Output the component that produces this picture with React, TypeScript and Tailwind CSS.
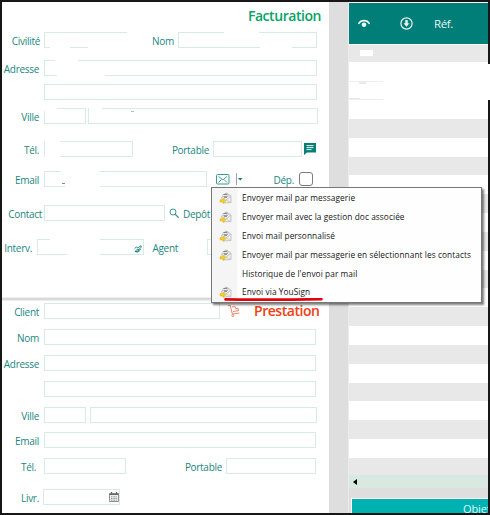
import type { ReactNode } from "react";

function Row({ className, children }: { className: string; children: ReactNode }) {
  return <div className={`flex shrink-0 items-center ${className}`}>{children}</div>;
}

function Label({ className = "w-[37px]", children }: { className?: string; children: ReactNode }) {
  return (
    <span className={`flex shrink-0 justify-end whitespace-nowrap pt-[2px] text-[10px] font-medium leading-4 tracking-[-0.3px] text-[#1a8780] ${className}`}>
      {children}
    </span>
  );
}

function Field({ className, children }: { className: string; children?: ReactNode }) {
  return (
    <div className={`flex h-4 shrink-0 items-center justify-end border border-[#d9ebe5] bg-white ${className}`}>
      {children}
    </div>
  );
}

function MailItemIcon() {
  return (
    <svg width="13" height="12" viewBox="0 0 13 12">
      <path d="M2.5 5 7 .8 12 4v6.5l-8 .5z" fill="#ededea" stroke="#b3b3b1" strokeWidth=".7" />
      <path d="M4 2.5 8.5 2l2 3-3 2.5L3.8 6z" fill="#fff" stroke="#aaa" strokeWidth=".4" />
      <path d="M4.5 2.6 8.500 2.200M4.500 4.400l4.500-.2M5 5.700l3-.1" stroke="#555" strokeWidth=".7" />
      <path d="m7 8 4.800-3.600M7 8l4.500 2.400" stroke="#bbb" strokeWidth=".6" />
      <path d="M1 7.700h3.300V6.200L7 8.800l-2.700 2.600V10H1z" fill="#f8cf1c" stroke="#e0b01a" strokeWidth=".5" />
    </svg>
  );
}

const menu = [
  { text: "Envoyer mail par messagerie", icon: true },
  { text: "Envoyer mail avec la gestion doc associée", icon: true },
  { text: "Envoi mail personnalisé", icon: true },
  { text: "Envoyer mail par messagerie en sélectionnant les contacts", icon: true },
  { text: "Historique de l'envoi par mail", icon: false },
  { text: "Envoi via YouSign", icon: true },
];

function ContextMenu() {
  return (
    <div className="absolute left-[211px] top-[187px] h-[116px] w-[271px] border border-[#777] bg-[#fefefe] shadow-[2px_2px_2px_rgba(0,0,0,0.5)]">
      <div className="flex h-full flex-col bg-[linear-gradient(90deg,#f5f5f5_25px,#fefefe_26px)] pt-[1px]">
        {menu.map((m) => (
          <div key={m.text} className="flex h-[18.8px] shrink-0 items-center">
            <span className="flex w-[30px] shrink-0 pl-[7px]">{m.icon && <MailItemIcon />}</span>
            <span className="whitespace-nowrap text-[8.3px] font-medium leading-3 tracking-[0.07px] text-[#161616]">{m.text}</span>
          </div>
        ))}
      </div>
      <svg className="absolute left-[12px] top-[109px]" width="100" height="5" viewBox="0 0 100 5">
        <path d="M1.500 2.400C30 3 65 2.500 97.500 2.200" stroke="#e1050b" strokeWidth="2.600" strokeLinecap="round" fill="none" />
      </svg>
    </div>
  );
}

function Billing() {
  return (
    <section className="flex h-[295px] shrink-0 flex-col">
      <h2 className="mt-[4px] flex h-[20px] justify-end pr-[8px] text-[14px] font-semibold leading-5 tracking-[-0.45px] text-[#06a366]">Facturation</h2>
      <Row className="mt-[6px] h-4">
        <Label className="w-[38px]">Civilité</Label>
        <Field className="ml-1 w-[96px]" />
        <Label className="ml-[3px] w-[31px]">Nom</Label>
        <Field className="ml-1 w-[139px]" />
      </Row>
      <Row className="mt-[12px] h-4">
        <Label>Adresse</Label>
        <Field className="ml-[5px] w-[273px]" />
      </Row>
      <Row className="mt-[8px] h-4">
        <Field className="ml-[42px] w-[273px]" />
      </Row>
      <Row className="mt-[8px] h-4">
        <Label>Ville</Label>
        <Field className="ml-[5px] w-[42px]" />
        <Field className="ml-[2px] w-[230px]" />
      </Row>
      <Row className="mt-[17px] h-4">
        <Label>Tél.</Label>
        <Field className="ml-[5px] w-[89px]" />
        <Label className="w-[76px]">Portable</Label>
        <Field className="ml-1 w-[89px]" />
        <svg className="ml-[2px]" width="12" height="12" viewBox="0 0 12 12">
          <path d="M0 0h12v9.500H3L0 12z" fill="#087e77" />
          <path d="M2.500 2.600h7M2.500 4.600h7M2.500 6.600h5" stroke="#fff" strokeWidth=".9" />
        </svg>
      </Row>
      <Row className="mt-[14px] h-4">
        <Label>Email</Label>
        <Field className="ml-[5px] w-[163px]" />
        <svg className="ml-[9px]" width="14" height="11" viewBox="0 0 14 11" fill="none" stroke="#3a9a94">
          <rect x=".5" y=".5" width="12.500" height="9.500" rx="1" />
          <path d="m2.500 2.500 4.300 3.300L11 2.500M2.500 8.500l3-3M11 8.500l-3-3" />
        </svg>
        <svg className="ml-[6px]" width="7" height="12" viewBox="0 0 7 12">
          <path d="M.5 0v12" stroke="#888" strokeWidth=".8" />
          <path d="M2 5h4.500L4.250 7.500z" fill="#087e77" />
        </svg>
        <Label className="w-[51px]">Dép.</Label>
        <div className="ml-[5px] size-[14px] rounded-[3px] border border-[#7c7c7c] bg-white" />
      </Row>
      <Row className="mt-[18px] h-4">
        <Label className="w-[40px]">Contact</Label>
        <Field className="ml-[2px] w-[121px]" />
        <svg className="ml-[4px]" width="11" height="11" viewBox="0 0 11 11" fill="none" stroke="#3a9690">
          <circle cx="4" cy="4" r="3" />
          <path d="m6.200 6.200 3.500 3.500" strokeWidth="1.300" />
        </svg>
        <Label className="w-[30px]">Depôt</Label>
      </Row>
      <Row className="mt-[18px] h-4">
        <Label className="w-[30px]">Interv.</Label>
        <Field className="ml-[5px] w-[107px] pr-[1px]">
          <svg className="mt-1" width="8" height="8" viewBox="0 0 8 8" fill="none" stroke="#087e77" strokeWidth=".9">
            <path d="M.6 3.600 2.300 2l1.500.8L6.900.8 7.300 2 5 4.500 2.800 4.800 1 6.500h2l3.800-2.300M2.600 7.400 5.600 6" />
          </svg>
        </Field>
        <Label className="w-[34px]">Agent</Label>
        <Field className="ml-[29px] w-[40px]" />
      </Row>
    </section>
  );
}

function Service() {
  return (
    <section className="flex flex-col">
      <Row className="mt-[2px] h-4">
        <Label>Client</Label>
        <Field className="ml-[5px] w-[176px]" />
        <svg className="ml-[8px]" width="13" height="12" viewBox="0 0 13 12" fill="none" stroke="#ef7657" strokeWidth=".9">
          <path d="M0 .6h2.300l2 8.400 7-1M5 6.500l5.500-.8-.5-2.500-2.300.4L7 1.500l-3 .6" />
          <circle cx="4.800" cy="10.500" r="1" />
        </svg>
        <h2 className="ml-[13px] whitespace-nowrap text-[14px] font-semibold leading-4 tracking-[-0.45px] text-[#f04012]">Prestation</h2>
      </Row>
      <Row className="mt-[10px] h-4">
        <Label>Nom</Label>
        <Field className="ml-[5px] w-[272px]" />
      </Row>
      <Row className="mt-[10px] h-4">
        <Label>Adresse</Label>
        <Field className="ml-[5px] w-[272px]" />
      </Row>
      <Row className="mt-[10px] h-4">
        <Field className="ml-[42px] w-[272px]" />
      </Row>
      <Row className="mt-[10px] h-4">
        <Label>Ville</Label>
        <Field className="ml-[5px] w-[42px]" />
        <Field className="ml-[4px] w-[227px]" />
      </Row>
      <Row className="mt-[9px] h-4">
        <Label>Email</Label>
        <Field className="ml-[5px] w-[272px]" />
      </Row>
      <Row className="mt-[10px] h-4">
        <Label className="w-[34px]">Tél.</Label>
        <Field className="ml-[8px] w-[82px]" />
        <Label className="w-[96px]">Portable</Label>
        <Field className="ml-1 w-[90px]" />
      </Row>
      <Row className="mt-[15px] h-4">
        <Label>Livr.</Label>
        <Field className="ml-[4px] w-[77px]">
          <svg width="10" height="10" viewBox="0 0 10 10">
            <path d="M.5 1.500h9v8h-9z" fill="#eee" stroke="#777" strokeWidth=".8" />
            <path d="M.5 2.300h9M2.500 0v2M7.500 0v2" stroke="#666" strokeWidth="1.300" />
            <path d="M2 4.800h6M2 6.500h6M2 8.200h6" stroke="#888" strokeWidth=".9" strokeDasharray="1 .6" />
          </svg>
        </Field>
      </Row>
    </section>
  );
}

function Table() {
  return (
    <section className="flex w-[139px] shrink-0 flex-col">
      <header className="mt-[1px] flex h-[41px] shrink-0 items-center bg-[#007e77] text-[#e9f6f4]">
        <svg className="ml-[9px]" width="12" height="10" viewBox="0 0 12 10" fill="none" stroke="currentColor">
          <path d="M.5 5C2.500.4 9.500.4 11.500 5" strokeWidth="1.700" />
          <circle cx="6" cy="5.800" r="2.300" fill="currentColor" stroke="none" />
        </svg>
        <svg className="ml-[30px]" width="13" height="13" viewBox="0 0 13 13" fill="none" stroke="currentColor">
          <circle cx="6.500" cy="6.500" r="5.600" strokeWidth="1.200" />
          <path d="M5.300 3h2.400v3.200h1.700L6.500 9.700 3.600 6.200h1.700z" fill="currentColor" stroke="none" />
        </svg>
        <span className="ml-[21px] text-[11.5px] tracking-[-0.4px]">Réf.</span>
      </header>
      <div className="h-[18px] shrink-0 border-t border-white bg-[#e8e8e8] pl-[11px] pt-[5px]">
        <div className="h-[6px] w-[13px] bg-white" />
      </div>
      <div className="h-[57px] shrink-0 bg-white pt-[19px]">
        <div className="h-px w-[34px] bg-[#eee]" />
        <div className="ml-[10px] h-[2px] w-[7px] bg-[#eaeaea]" />
        <div className="mt-[14px] h-[2px] w-[11px] bg-[#e6e6e6]" />
        <div className="-mt-px h-px w-[34px] bg-[#eee]" />
      </div>
      <div className="h-[356px] shrink-0 bg-[repeating-linear-gradient(180deg,#e8e8e8_0px,#e8e8e8_18.800px,#ffffff_18.800px,#ffffff_37.670px)]" />
      <div className="flex h-[13px] shrink-0 items-center bg-[#d9e8e1] pl-[4px]">
        <div className="border-y-[3px] border-r-[4px] border-y-transparent border-r-black" />
      </div>
      <div className="h-[10px] shrink-0 bg-[#dedede]" />
      <div className="flex h-[15px] shrink-0 bg-[#dedede] pl-[2px]">
        <footer className="flex-1 overflow-hidden border-l border-t border-white bg-[#00b1b2] pl-[111px] pt-[2px] text-[11px] leading-4 tracking-[-0.1px] text-[#def8f6]">
          Objet
        </footer>
      </div>
    </section>
  );
}

export default function App() {
  return (
    <div className="relative h-[515px] w-[490px] overflow-hidden bg-[#171717] pl-[2px] pt-[2px] font-['Open_Sans','Noto_Sans',sans-serif]">
      <div className="flex h-[511px] w-[486px] overflow-hidden bg-white">
        <div className="flex w-[327px] shrink-0 flex-col bg-white">
          <Billing />
          <div className="h-[4px] shrink-0 border-y border-[#eee] bg-[#d9d9d9]" />
          <Service />
        </div>
        <div className="w-[20px] shrink-0 border-r border-[#ececec] bg-[#dedede]" />
        <Table />
      </div>
      {/* Masked personal data */}
      <div className="absolute left-[127px] top-[31px] h-[20px] w-[14px] bg-white" />
      <div className="absolute left-[50px] top-[40px] h-[10px] w-[20px] bg-white" />
      <div className="absolute left-[88px] top-[40px] h-[10px] w-[50px] bg-white" />
      <div className="absolute left-[224px] top-[31px] h-[5px] w-[35px] bg-white" />
      <div className="absolute left-[260px] top-[40px] h-[10px] w-[32px] bg-white" />
      <div className="absolute left-[55px] top-[58px] h-[8px] w-[23px] bg-white" />
      <div className="absolute left-[57px] top-[67px] h-[10px] w-[48px] bg-white" />
      <div className="absolute left-[44px] top-[107px] h-[4px] w-[13px] bg-white" />
      <div className="absolute left-[89px] top-[107px] h-[4px] w-[13px] bg-white" />
      <div className="absolute left-[45px] top-[140px] h-[18px] w-[15px] bg-white" />
      <div className="absolute left-[61px] top-[170px] h-[8px] w-[38px] bg-white" />
      <div className="absolute left-[65px] top-[180px] h-[9px] w-[35px] bg-white" />
      <div className="absolute left-[62px] top-[183px] h-px w-[3px] bg-[#888]" />
      <div className="absolute left-[50px] top-[237px] h-[6px] w-[50px] bg-white" />
      <div className="absolute left-[67px] top-[245px] h-[10px] w-[33px] bg-white" />
      <div className="absolute left-[131px] top-[111px] h-px w-[3px] bg-[#bbb]" />
      <div className="absolute left-[486px] top-[64px] h-[36px] w-[4px] bg-white" />
      <ContextMenu />
    </div>
  );
}
